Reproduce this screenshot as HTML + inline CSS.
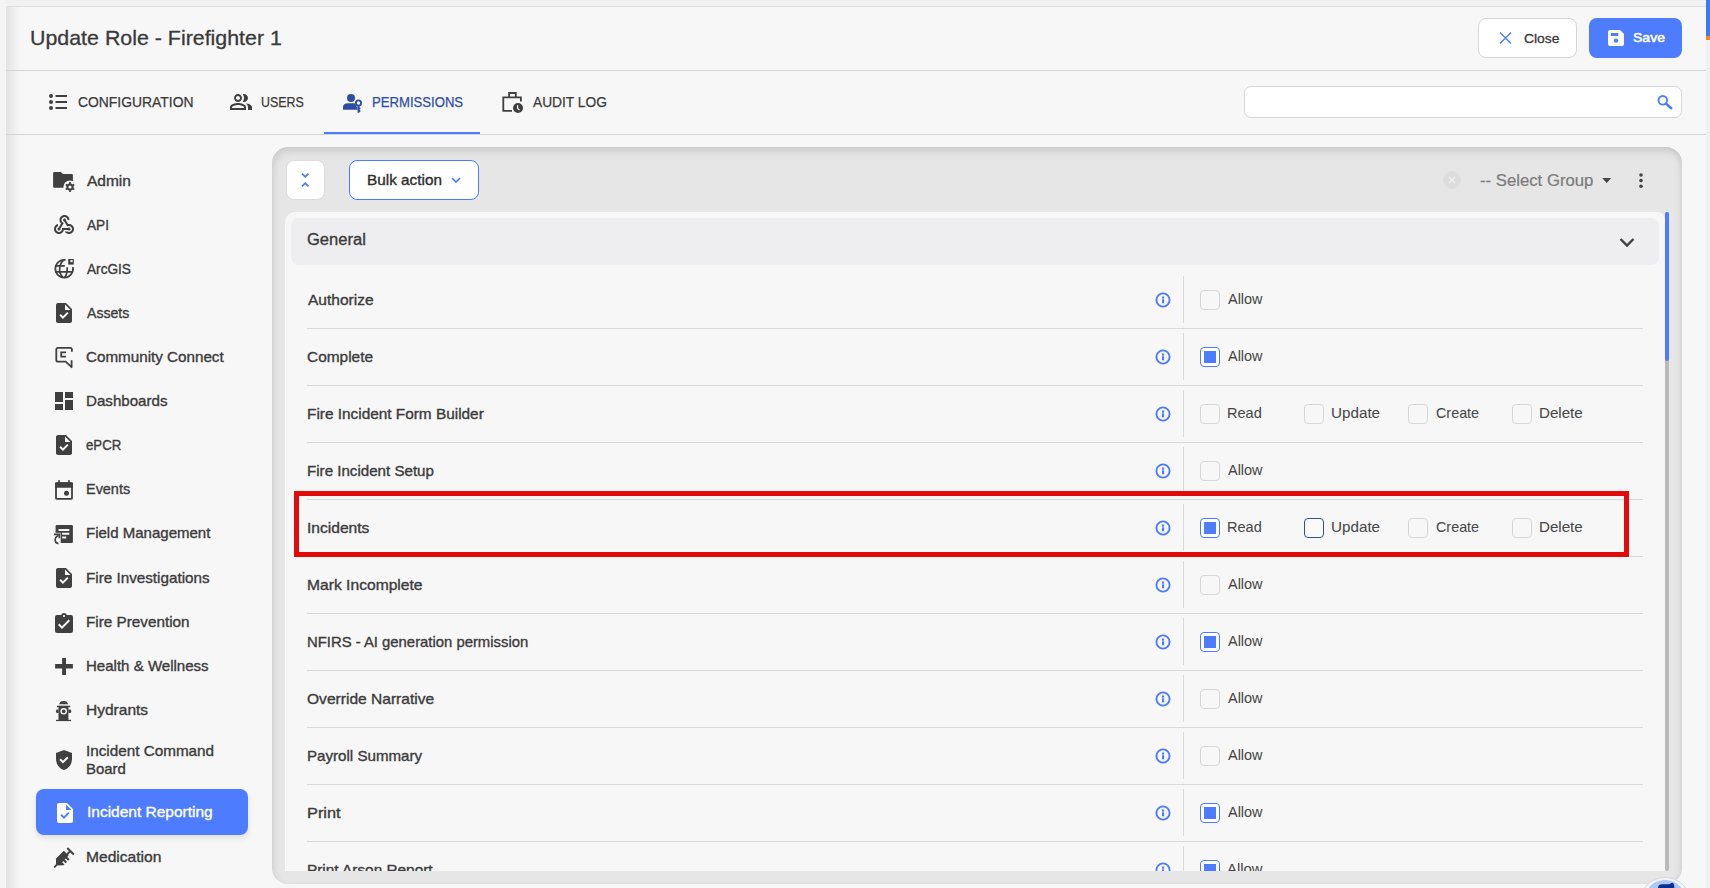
<!DOCTYPE html>
<html><head><meta charset="utf-8"><title>Update Role</title>
<style>
*{box-sizing:border-box;margin:0;padding:0}
html,body{width:1710px;height:888px;overflow:hidden;background:#f7f7f7;font-family:"Liberation Sans",sans-serif;color:#3a3a3a}
body{position:relative}
.t,.i,.b{position:absolute}
.t{white-space:nowrap}
</style></head><body>
<div class="b" style="left:0;top:0;width:1710px;height:6px;background:#f1f1f1"></div>
<div class="b" style="left:0;top:6px;width:1706px;height:1px;background:#dedede"></div>
<div class="b" style="left:0;top:0;width:6px;height:888px;background:#f4f4f4"></div>
<div class="b" style="left:6px;top:7px;width:14px;height:881px;background:linear-gradient(to right,#e2e2e2,rgba(247,247,247,0))"></div>
<div class="b" style="left:1706px;top:0;width:4px;height:888px;background:#f0f1f4"></div>
<div class="b" style="left:1706px;top:0;width:4px;height:36px;background:#3d78f5"></div>
<div class="b" style="left:1706px;top:36px;width:4px;height:4px;background:#ff7f1a"></div>
<div class="t" style="left:29.76px;top:27.22px;font-size:21px;line-height:21px;font-weight:normal;color:#3a3a3a;-webkit-text-stroke:0.3px #3a3a3a;transform:scaleX(1.0180);transform-origin:0 0;">Update Role - Firefighter 1</div>
<div class="b" style="left:1478px;top:18px;width:99px;height:40px;background:#fff;border:1px solid #d6d6d6;border-radius:8px"></div>
<svg class="i" style="left:1499px;top:32px;" width="13" height="12" viewBox="0 0 13 12"><path d="M1 0.5L12 11.5M12 0.5L1 11.5" stroke="#4d7cfe" stroke-width="1.4" fill="none"/></svg>
<div class="t" style="left:1524.00px;top:31.57px;font-size:13.5px;line-height:13.5px;font-weight:normal;color:#3a3a3a;-webkit-text-stroke:0.3px #3a3a3a;transform:scaleX(1.0294);transform-origin:0 0;">Close</div>
<div class="b" style="left:1589px;top:18px;width:93px;height:40px;background:#4d7cfe;border-radius:8px"></div>
<svg class="i" style="left:1608px;top:30px;" width="16" height="16" viewBox="0 0 16 16"><path d="M2 0H12L16 4V14Q16 16 14 16H2Q0 16 0 14V2Q0 0 2 0Z" fill="#fff"/><rect x="3" y="3" width="7.3" height="3" fill="#4d7cfe"/><circle cx="8" cy="10.6" r="2.2" fill="#4d7cfe"/></svg>
<div class="t" style="left:1632.97px;top:31.49px;font-size:13.6px;line-height:13.6px;font-weight:normal;color:#ffffff;-webkit-text-stroke:0.5px #ffffff;transform:scaleX(1.0333);transform-origin:0 0;">Save</div>
<div class="b" style="left:6px;top:70px;width:1700px;height:1px;background:#d4d4d4"></div>
<svg class="i" style="left:49px;top:94px;" width="18" height="16" viewBox="0 0 18 16"><circle cx="2" cy="2" r="2" fill="#404040"/><circle cx="2" cy="8" r="2" fill="#404040"/><circle cx="2" cy="14" r="2" fill="#404040"/><path d="M6.5 2H18M6.5 8H18M6.5 14H18" stroke="#404040" stroke-width="1.9"/></svg>
<div class="t" style="left:78.00px;top:95.15px;font-size:14px;line-height:14px;font-weight:normal;color:#3a3a3a;-webkit-text-stroke:0.25px #3a3a3a;transform:scaleX(0.9922);transform-origin:0 0;">CONFIGURATION</div>
<svg class="i" style="left:229px;top:90px;" width="24" height="24" viewBox="0 0 24 24"><path d="M16.67 13.13C18.04 14.06 19 15.32 19 17v3h4v-3c0-2.18-3.57-3.47-6.33-3.87zM9 12c2.21 0 4-1.79 4-4s-1.79-4-4-4-4 1.79-4 4 1.79 4 4 4zm0-6c1.1 0 2 .9 2 2s-.9 2-2 2-2-.9-2-2 .9-2 2-2zM15 12c2.21 0 4-1.79 4-4s-1.79-4-4-4c-.47 0-.91.1-1.33.24C14.5 5.27 15 6.58 15 8s-.5 2.73-1.33 3.76c.42.14.86.24 1.33.24zM9 13c-2.67 0-8 1.34-8 4v3h16v-3c0-2.66-5.33-4-8-4zm6 5H3v-.99C3.2 16.29 6.3 15 9 15s5.8 1.29 6 2v1z" fill="#404040"/></svg>
<div class="t" style="left:260.92px;top:95.15px;font-size:14px;line-height:14px;font-weight:normal;color:#3a3a3a;-webkit-text-stroke:0.25px #3a3a3a;transform:scaleX(0.8872);transform-origin:0 0;">USERS</div>
<svg class="i" style="left:342px;top:93px;" width="22" height="21" viewBox="0 0 22 21"><circle cx="9" cy="5" r="4" fill="#2f4fa6"/><path d="M1 16.8V14.5Q1 10.3 6 10.3H13.2Q13.5 13 15.5 14.5V16.8Z" fill="#2f4fa6"/><circle cx="16.5" cy="10" r="2.6" fill="none" stroke="#2f4fa6" stroke-width="1.9"/><path d="M16.5 12.5V19.8M16.5 15.5H18.3M16.5 18H18.3" stroke="#2f4fa6" stroke-width="1.9"/></svg>
<div class="t" style="left:372.22px;top:95.15px;font-size:14px;line-height:14px;font-weight:normal;color:#2f4fa6;-webkit-text-stroke:0.25px #2f4fa6;transform:scaleX(0.9371);transform-origin:0 0;">PERMISSIONS</div>
<div class="b" style="left:324px;top:132px;width:156px;height:3px;background:#4d7cfe"></div>
<svg class="i" style="left:500px;top:90px;" width="26" height="24" viewBox="0 0 26 24"><path d="M12 20.9H3.3V7.3H20.9V11.5" fill="none" stroke="#404040" stroke-width="1.8"/><path d="M9.1 7.3V3H15.8V7.3" fill="none" stroke="#404040" stroke-width="1.8"/><circle cx="18" cy="18" r="5" fill="#404040"/><path d="M17.6 15.2V18.5L19.6 20" fill="none" stroke="#f7f7f7" stroke-width="1.2"/></svg>
<div class="t" style="left:532.59px;top:95.15px;font-size:14px;line-height:14px;font-weight:normal;color:#3a3a3a;-webkit-text-stroke:0.25px #3a3a3a;transform:scaleX(0.9827);transform-origin:0 0;">AUDIT LOG</div>
<div class="b" style="left:6px;top:134px;width:1700px;height:1px;background:#d4d4d4"></div>
<div class="b" style="left:1244px;top:86px;width:438px;height:32px;background:#fff;border:1px solid #d6d6d6;border-radius:7px"></div>
<svg class="i" style="left:1656px;top:94px;" width="18" height="18" viewBox="0 0 18 18"><circle cx="6.8" cy="6.3" r="4.3" fill="none" stroke="#4d7cfe" stroke-width="1.9"/><path d="M10 9.6L15.2 14.2" stroke="#4d7cfe" stroke-width="2.6" stroke-linecap="round"/></svg>
<div class="t" style="left:86.82px;top:173.73px;font-size:14.5px;line-height:14.5px;font-weight:normal;color:#3c3c3c;-webkit-text-stroke:0.35px currentColor;transform:scaleX(1.0683);transform-origin:0 0;">Admin</div>
<div class="t" style="left:86.77px;top:217.73px;font-size:14.5px;line-height:14.5px;font-weight:normal;color:#3c3c3c;-webkit-text-stroke:0.35px currentColor;transform:scaleX(0.9391);transform-origin:0 0;">API</div>
<div class="t" style="left:86.77px;top:261.73px;font-size:14.5px;line-height:14.5px;font-weight:normal;color:#3c3c3c;-webkit-text-stroke:0.35px currentColor;transform:scaleX(0.9404);transform-origin:0 0;">ArcGIS</div>
<div class="t" style="left:86.78px;top:305.73px;font-size:14.5px;line-height:14.5px;font-weight:normal;color:#3c3c3c;-webkit-text-stroke:0.35px currentColor;transform:scaleX(0.9727);transform-origin:0 0;">Assets</div>
<div class="t" style="left:85.76px;top:349.73px;font-size:14.5px;line-height:14.5px;font-weight:normal;color:#3c3c3c;-webkit-text-stroke:0.35px currentColor;transform:scaleX(1.0481);transform-origin:0 0;">Community Connect</div>
<div class="t" style="left:85.76px;top:393.73px;font-size:14.5px;line-height:14.5px;font-weight:normal;color:#3c3c3c;-webkit-text-stroke:0.35px currentColor;transform:scaleX(1.0429);transform-origin:0 0;">Dashboards</div>
<div class="t" style="left:85.84px;top:437.73px;font-size:14.5px;line-height:14.5px;font-weight:normal;color:#3c3c3c;-webkit-text-stroke:0.35px currentColor;transform:scaleX(0.9135);transform-origin:0 0;">ePCR</div>
<div class="t" style="left:85.79px;top:481.73px;font-size:14.5px;line-height:14.5px;font-weight:normal;color:#3c3c3c;-webkit-text-stroke:0.35px currentColor;transform:scaleX(0.9955);transform-origin:0 0;">Events</div>
<div class="t" style="left:85.77px;top:525.73px;font-size:14.5px;line-height:14.5px;font-weight:normal;color:#3c3c3c;-webkit-text-stroke:0.35px currentColor;transform:scaleX(1.0358);transform-origin:0 0;">Field Management</div>
<div class="t" style="left:85.76px;top:570.73px;font-size:14.5px;line-height:14.5px;font-weight:normal;color:#3c3c3c;-webkit-text-stroke:0.35px currentColor;transform:scaleX(1.0504);transform-origin:0 0;">Fire Investigations</div>
<div class="t" style="left:85.76px;top:614.73px;font-size:14.5px;line-height:14.5px;font-weight:normal;color:#3c3c3c;-webkit-text-stroke:0.35px currentColor;transform:scaleX(1.0526);transform-origin:0 0;">Fire Prevention</div>
<div class="t" style="left:85.77px;top:658.73px;font-size:14.5px;line-height:14.5px;font-weight:normal;color:#3c3c3c;-webkit-text-stroke:0.35px currentColor;transform:scaleX(1.0376);transform-origin:0 0;">Health &amp; Wellness</div>
<div class="t" style="left:85.75px;top:702.73px;font-size:14.5px;line-height:14.5px;font-weight:normal;color:#3c3c3c;-webkit-text-stroke:0.35px currentColor;transform:scaleX(1.0702);transform-origin:0 0;">Hydrants</div>
<div class="t" style="left:85.76px;top:743.73px;font-size:14.5px;line-height:14.5px;font-weight:normal;color:#3c3c3c;-webkit-text-stroke:0.35px currentColor;transform:scaleX(1.0521);transform-origin:0 0;">Incident Command</div>
<div class="t" style="left:85.77px;top:761.73px;font-size:14.5px;line-height:14.5px;font-weight:normal;color:#3c3c3c;-webkit-text-stroke:0.35px currentColor;transform:scaleX(1.0289);transform-origin:0 0;">Board</div>
<div class="t" style="left:85.74px;top:849.73px;font-size:14.5px;line-height:14.5px;font-weight:normal;color:#3c3c3c;-webkit-text-stroke:0.35px currentColor;transform:scaleX(1.0754);transform-origin:0 0;">Medication</div>
<div class="b" style="left:36px;top:789px;width:212px;height:46px;background:#4d7cfe;border-radius:8px;box-shadow:0 3px 6px rgba(0,0,0,0.10)"></div>
<div class="t" style="left:86.55px;top:805.03px;font-size:14.5px;line-height:14.5px;font-weight:normal;color:#ffffff;-webkit-text-stroke:0.35px currentColor;transform:scaleX(1.0684);transform-origin:0 0;">Incident Reporting</div>
<svg class="i" style="left:52.7px;top:801.4px;" width="24" height="24" viewBox="0 0 24 24"><path d="M14 2H6c-1.1 0-1.99.9-1.99 2L4 20c0 1.1.89 2 1.99 2H18c1.1 0 2-.9 2-2V8l-6-6zM13 9V3.5L18.5 9H13z" fill="#ffffff"/><path d="M10.94 18L7.4 14.46l1.41-1.41 2.12 2.12 4.24-4.24 1.41 1.41L10.94 18z" fill="#4d7cfe"/></svg>
<svg class="i" style="left:52px;top:171px;" width="24" height="24" viewBox="0 0 24 24"><path d="M2.1 1H8.9L10.9 3H19.9Q20.9 3 20.9 4V16.7H2.1Q1.1 16.7 1.1 15.7V2Q1.1 1 2.1 1Z" fill="#404040"/><circle cx="18" cy="16" r="6.6" fill="#f7f7f7"/><path d="M19.85 12.80L18.83 12.39L18.87 11.08L17.13 11.08L17.17 12.39L16.15 12.80L15.29 13.48L14.17 12.79L13.30 14.29L14.46 14.92L14.30 16.00L14.46 17.08L13.30 17.71L14.17 19.21L15.29 18.52L16.15 19.20L17.17 19.61L17.13 20.92L18.87 20.92L18.83 19.61L19.85 19.20L20.71 18.52L21.83 19.21L22.70 17.71L21.54 17.08L21.70 16.00L21.54 14.92L22.70 14.29L21.83 12.79L20.71 13.48Z" fill="#404040"/><circle cx="18" cy="16" r="1.6" fill="#f7f7f7"/></svg>
<svg class="i" style="left:52px;top:213.3px;" width="24" height="24" viewBox="0 0 24 24"><path d="M10 15h5.88c.27-.31.67-.5 1.12-.5.83 0 1.5.67 1.5 1.5s-.67 1.5-1.5 1.5c-.44 0-.84-.19-1.12-.5H11.9c-.46 2.28-2.48 4-4.9 4-2.76 0-5-2.24-5-5 0-2.42 1.72-4.44 4-4.9v2.07c-1.16.41-2 1.53-2 2.83 0 1.65 1.35 3 3 3s3-1.35 3-3v-1zm2.5-11c1.65 0 3 1.35 3 3h2c0-2.76-2.24-5-5-5s-5 2.24-5 5c0 1.43.6 2.71 1.55 3.62l-2.35 3.9c-.68.14-1.2.75-1.2 1.48 0 .83.67 1.5 1.5 1.5s1.5-.67 1.5-1.5c0-.16-.02-.31-.07-.45l3.38-5.63C10.49 9.61 9.5 8.42 9.5 7c0-1.65 1.35-3 3-3zm4.5 9c-.64 0-1.23.2-1.72.54l-3.05-5.07C11.53 8.35 11 7.74 11 7c0-.83.67-1.5 1.5-1.5S14 6.17 14 7c0 .15-.02.29-.06.43l2.19 3.65c.28-.05.57-.08.87-.08 2.76 0 5 2.24 5 5s-2.24 5-5 5c-1.85 0-3.47-1.01-4.33-2.5h2.67c.48.32 1.05.5 1.66.5 1.65 0 3-1.35 3-3s-1.35-3-3-3z" fill="#404040"/></svg>
<svg class="i" style="left:52px;top:257px;" width="24" height="24" viewBox="0 0 24 24"><path d="M13.6 3.05A8.85 8.85 0 1 0 20.9 10.2" fill="none" stroke="#404040" stroke-width="1.8"/><path d="M3.3 8.8H12.8M3.3 14.8H21" fill="none" stroke="#404040" stroke-width="1.7"/><path d="M11.5 3.2Q7.3 7.5 7.6 13Q8 18 11 20.6" fill="none" stroke="#404040" stroke-width="1.7"/><path d="M15.2 10.2Q15.6 16.5 12.6 20.6" fill="none" stroke="#404040" stroke-width="1.7"/><rect x="16.2" y="2" width="5.6" height="5.6" fill="#404040"/><rect x="18.4" y="3.1" width="2.2" height="2" fill="#f7f7f7"/></svg>
<svg class="i" style="left:52px;top:300.8px;" width="24" height="24" viewBox="0 0 24 24"><path d="M14 2H6c-1.1 0-1.99.9-1.99 2L4 20c0 1.1.89 2 1.99 2H18c1.1 0 2-.9 2-2V8l-6-6zm-3.06 16L7.4 14.46l1.41-1.41 2.12 2.12 4.24-4.24 1.41 1.41L10.94 18zM13 9V3.5L18.5 9H13z" fill="#404040"/></svg>
<svg class="i" style="left:52px;top:432.8px;" width="24" height="24" viewBox="0 0 24 24"><path d="M14 2H6c-1.1 0-1.99.9-1.99 2L4 20c0 1.1.89 2 1.99 2H18c1.1 0 2-.9 2-2V8l-6-6zm-3.06 16L7.4 14.46l1.41-1.41 2.12 2.12 4.24-4.24 1.41 1.41L10.94 18zM13 9V3.5L18.5 9H13z" fill="#404040"/></svg>
<svg class="i" style="left:52px;top:565.8px;" width="24" height="24" viewBox="0 0 24 24"><path d="M14 2H6c-1.1 0-1.99.9-1.99 2L4 20c0 1.1.89 2 1.99 2H18c1.1 0 2-.9 2-2V8l-6-6zm-3.06 16L7.4 14.46l1.41-1.41 2.12 2.12 4.24-4.24 1.41 1.41L10.94 18zM13 9V3.5L18.5 9H13z" fill="#404040"/></svg>
<svg class="i" style="left:52px;top:345px;" width="24" height="24" viewBox="0 0 24 24"><path d="M19.9 6.8V4.6Q19.9 2.9 18.2 2.9H6Q4.3 2.9 4.3 4.6V15Q4.3 16.7 6 16.7H13.7L19.6 22.2V15.3" fill="none" stroke="#404040" stroke-width="1.8" stroke-linejoin="round"/><path d="M14 7.4H9.2V11.7H14" fill="none" stroke="#404040" stroke-width="1.8"/></svg>
<svg class="i" style="left:52px;top:389px;" width="24" height="24" viewBox="0 0 24 24"><path d="M3 13h8V3H3v10zm0 8h8v-6H3v6zm10 0h8V11h-8v10zm0-18v6h8V3h-8z" fill="#404040"/></svg>
<svg class="i" style="left:52px;top:479px;" width="24" height="24" viewBox="0 0 24 24"><path d="M7 1V4M17 1V4" stroke="#404040" stroke-width="1.6"/><rect x="4" y="4.1" width="16" height="15.8" rx="1" fill="none" stroke="#404040" stroke-width="1.8"/><rect x="3.1" y="3.2" width="17.8" height="5.6" rx="1" fill="#404040"/><circle cx="14.5" cy="14.3" r="2.5" fill="#404040"/></svg>
<svg class="i" style="left:52px;top:523px;" width="24" height="24" viewBox="0 0 24 24"><rect x="3.6" y="2.1" width="17.3" height="17.8" rx="1.2" fill="#404040"/><path d="M6.5 5.9H17.3V7.9H6.5ZM10.1 9.7H17.3V11.7H10.1ZM10.1 13.5H14.2V15.6H10.1Z" fill="#f7f7f7"/><path d="M1 9.8H8.7V22H1Z" fill="#f7f7f7"/><path d="M2 11.4H7.4V15.3" fill="none" stroke="#404040" stroke-width="1.6"/><path d="M6.6 12.4Q2.6 14 3.2 17.8Q3.8 20.4 6.4 20.6" fill="none" stroke="#404040" stroke-width="1.6"/></svg>
<svg class="i" style="left:52px;top:612px;" width="24" height="24" viewBox="0 0 24 24"><path d="M19 3h-4.18C14.4 1.84 13.3 1 12 1c-1.3 0-2.4.84-2.82 2H5c-1.1 0-2 .9-2 2v14c0 1.1.9 2 2 2h14c1.1 0 2-.9 2-2V5c0-1.1-.9-2-2-2zm-7 0c.55 0 1 .45 1 1s-.45 1-1 1-1-.45-1-1 .45-1 1-1zm-2 14l-4-4 1.41-1.41L10 14.17l6.59-6.59L18 9l-8 8z" fill="#404040"/></svg>
<svg class="i" style="left:52px;top:656px;" width="24" height="24" viewBox="0 0 24 24"><path d="M10.1 2H14V8.1H20.9V12.6H14V19H10.1V12.6H3.1V8.1H10.1Z" fill="#404040"/></svg>
<svg class="i" style="left:52px;top:699px;" width="24" height="24" viewBox="0 0 24 24"><path d="M7.2 5.3Q7.6 1.9 11.6 1.9Q15.6 1.9 16 5.3Z" fill="#404040"/><rect x="4.9" y="6.7" width="13.3" height="1.5" fill="#404040"/><rect x="6.5" y="8" width="9.9" height="13.2" fill="#404040"/><path d="M6.5 10.5H4.6Q3.1 12.25 4.6 14H6.5ZM16.4 10.5H18.6Q20.3 12.25 18.6 14H16.4Z" fill="#404040"/><rect x="4" y="20.8" width="15.1" height="1.3" fill="#404040"/><circle cx="11.7" cy="12.3" r="2.6" fill="none" stroke="#f7f7f7" stroke-width="1.4"/></svg>
<svg class="i" style="left:52px;top:748px;" width="24" height="24" viewBox="0 0 24 24"><path d="M12 2L4 5v6.09c0 5.05 3.41 9.76 8 10.91 4.59-1.15 8-5.86 8-10.91V5l-8-3zm-1.06 13.54L7.4 12l1.41-1.41 2.12 2.12 4.24-4.24 1.41 1.41-5.64 5.66z" fill="#404040"/></svg>
<svg class="i" style="left:52px;top:846px;" width="24" height="24" viewBox="0 0 24 24"><g transform="translate(2.2 21.3) rotate(-45)"><rect x="0" y="-0.9" width="3.5" height="1.8" fill="#404040"/><path d="M2.5 0L7.5 -4.9H18.5V5.2H8Z" fill="#404040"/><path d="M9.3 2H10.8V5.6H9.3ZM12.9 2H14.4V5.6H12.9ZM16.5 2H18.6V5.6H16.5Z" fill="#f7f7f7"/><rect x="18" y="-1" width="4.5" height="2" fill="#404040"/><rect x="22" y="-4.4" width="1.9" height="9.2" fill="#404040"/></g></svg>
<div class="b" style="left:272px;top:147px;width:1410px;height:737px;background:#e6e6e6;border-radius:16px;box-shadow:inset 2px 5px 7px rgba(0,0,0,0.10), inset -3px 0 5px rgba(0,0,0,0.05)"></div>
<div class="b" style="left:286px;top:160px;width:39px;height:40px;background:#fff;border:1px solid #dcdcdc;border-radius:8px"></div>
<svg class="i" style="left:296px;top:168.3px;" width="20" height="24" viewBox="0 0 20 24"><path d="M6 5.6L9.2 8.8L12.4 5.6M6 18.4L9.2 15.2L12.4 18.4" fill="none" stroke="#4d7cfe" stroke-width="1.8"/></svg>
<div class="b" style="left:349px;top:160px;width:130px;height:40px;background:#fff;border:1px solid #4d7cfe;border-radius:8px"></div>
<div class="t" style="left:366.58px;top:173.08px;font-size:14.2px;line-height:14.2px;font-weight:normal;color:#2e2e2e;-webkit-text-stroke:0.35px currentColor;transform:scaleX(1.0797);transform-origin:0 0;">Bulk action</div>
<svg class="i" style="left:448px;top:172px;" width="16" height="14" viewBox="0 0 16 14"><path d="M4 6L8 10L12 6" fill="none" stroke="#4d7cfe" stroke-width="1.6"/></svg>
<svg class="i" style="left:1442px;top:170px;" width="20" height="20" viewBox="0 0 20 20"><circle cx="10" cy="10" r="9" fill="#dcdcdc"/><path d="M7 7L13 13M13 7L7 13" stroke="#f2f2f2" stroke-width="1.4"/></svg>
<div class="t" style="left:1480.00px;top:172.29px;font-size:16.2px;line-height:16.2px;font-weight:normal;color:#7b7b7b;-webkit-text-stroke:0.2px #7b7b7b;transform:scaleX(1.0330);transform-origin:0 0;">-- Select Group</div>
<svg class="i" style="left:1600px;top:175px;" width="14" height="10" viewBox="0 0 14 10"><path d="M2.2 3H11.2L6.7 8Z" fill="#454545"/></svg>
<svg class="i" style="left:1635px;top:172px;" width="12" height="18" viewBox="0 0 12 18"><circle cx="6" cy="3" r="1.8" fill="#454545"/><circle cx="6" cy="8.6" r="1.8" fill="#454545"/><circle cx="6" cy="14.2" r="1.8" fill="#454545"/></svg>
<div class="b" style="left:285px;top:212px;width:1380px;height:659px;background:#f7f7f7;border-radius:10px 8px 0 0"></div>
<div class="b" style="left:291px;top:218px;width:1368px;height:47px;background:#eeeef0;border-radius:8px"></div>
<div class="t" style="left:306.77px;top:231.76px;font-size:16px;line-height:16px;font-weight:normal;color:#3a3a3a;-webkit-text-stroke:0.35px currentColor;transform:scaleX(1.0339);transform-origin:0 0;">General</div>
<svg class="i" style="left:1617px;top:234px;" width="20" height="16" viewBox="0 0 20 16"><path d="M3.5 5L10 11.5L16.5 5" fill="none" stroke="#404040" stroke-width="2.4"/></svg>
<div class="b" style="left:1665px;top:212px;width:4px;height:659px;background:#bababa;border-radius:2px"></div>
<div class="b" style="left:1665px;top:212px;width:4px;height:149px;background:#4d7cfe;border-radius:2px"></div>
<div class="b" style="left:285px;top:212px;width:1380px;height:659px;overflow:hidden">
<div class="t" style="left:22.62px;top:80.93px;font-size:14.5px;line-height:14.5px;font-weight:normal;color:#3c3c3c;-webkit-text-stroke:0.35px currentColor;transform:scaleX(1.0721);transform-origin:0 0;">Authorize</div>
<svg class="i" style="left:869px;top:79.2px;" width="18" height="18" viewBox="0 0 18 18"><circle cx="9" cy="9" r="6.6" fill="none" stroke="#4d7cfe" stroke-width="1.9"/><rect x="8" y="5.5" width="2.1" height="2.2" fill="#4d7cfe"/><rect x="8" y="8.3" width="2.1" height="4" fill="#4d7cfe"/></svg>
<div class="b" style="left:898px;top:64px;width:1px;height:47px;background:#dadada"></div>
<div class="b" style="left:915px;top:78.2px;width:20px;height:20px;border:1px solid #d6d6d6;border-radius:4px;background:#f7f7f7"></div>
<div class="t" style="left:943.00px;top:80.18px;font-size:14.2px;line-height:14.2px;font-weight:normal;color:#474747;-webkit-text-stroke:0.05px #474747;transform:scaleX(1.0176);transform-origin:0 0;">Allow</div>
<div class="b" style="left:22px;top:116px;width:1336px;height:1px;background:#d8d8d8"></div>
<div class="t" style="left:21.55px;top:137.93px;font-size:14.5px;line-height:14.5px;font-weight:normal;color:#3c3c3c;-webkit-text-stroke:0.35px currentColor;transform:scaleX(1.0639);transform-origin:0 0;">Complete</div>
<svg class="i" style="left:869px;top:136.2px;" width="18" height="18" viewBox="0 0 18 18"><circle cx="9" cy="9" r="6.6" fill="none" stroke="#4d7cfe" stroke-width="1.9"/><rect x="8" y="5.5" width="2.1" height="2.2" fill="#4d7cfe"/><rect x="8" y="8.3" width="2.1" height="4" fill="#4d7cfe"/></svg>
<div class="b" style="left:898px;top:121px;width:1px;height:47px;background:#dadada"></div>
<div class="b" style="left:915px;top:135.2px;width:20px;height:20px;border:1.5px solid #4d7cfe;border-radius:4px;background:#fff"></div>
<div class="b" style="left:919px;top:139.2px;width:12px;height:12px;background:#4d7cfe"></div>
<div class="t" style="left:943.00px;top:137.18px;font-size:14.2px;line-height:14.2px;font-weight:normal;color:#474747;-webkit-text-stroke:0.05px #474747;transform:scaleX(1.0176);transform-origin:0 0;">Allow</div>
<div class="b" style="left:22px;top:173px;width:1336px;height:1px;background:#d8d8d8"></div>
<div class="t" style="left:21.55px;top:194.93px;font-size:14.5px;line-height:14.5px;font-weight:normal;color:#3c3c3c;-webkit-text-stroke:0.35px currentColor;transform:scaleX(1.0596);transform-origin:0 0;">Fire Incident Form Builder</div>
<svg class="i" style="left:869px;top:193.2px;" width="18" height="18" viewBox="0 0 18 18"><circle cx="9" cy="9" r="6.6" fill="none" stroke="#4d7cfe" stroke-width="1.9"/><rect x="8" y="5.5" width="2.1" height="2.2" fill="#4d7cfe"/><rect x="8" y="8.3" width="2.1" height="4" fill="#4d7cfe"/></svg>
<div class="b" style="left:898px;top:178px;width:1px;height:47px;background:#dadada"></div>
<div class="b" style="left:915px;top:192.2px;width:20px;height:20px;border:1px solid #d6d6d6;border-radius:4px;background:#f7f7f7"></div>
<div class="t" style="left:941.98px;top:194.18px;font-size:14.2px;line-height:14.2px;font-weight:normal;color:#474747;-webkit-text-stroke:0.05px #474747;transform:scaleX(1.0250);transform-origin:0 0;">Read</div>
<div class="b" style="left:1019px;top:192.2px;width:20px;height:20px;border:1px solid #d6d6d6;border-radius:4px;background:#f7f7f7"></div>
<div class="t" style="left:1045.93px;top:194.18px;font-size:14.2px;line-height:14.2px;font-weight:normal;color:#474747;-webkit-text-stroke:0.05px #474747;transform:scaleX(1.0727);transform-origin:0 0;">Update</div>
<div class="b" style="left:1123px;top:192.2px;width:20px;height:20px;border:1px solid #d6d6d6;border-radius:4px;background:#f7f7f7"></div>
<div class="t" style="left:1151.00px;top:194.18px;font-size:14.2px;line-height:14.2px;font-weight:normal;color:#474747;-webkit-text-stroke:0.05px #474747;transform:scaleX(1.0119);transform-origin:0 0;">Create</div>
<div class="b" style="left:1227px;top:192.2px;width:20px;height:20px;border:1px solid #d6d6d6;border-radius:4px;background:#f7f7f7"></div>
<div class="t" style="left:1253.93px;top:194.18px;font-size:14.2px;line-height:14.2px;font-weight:normal;color:#474747;-webkit-text-stroke:0.05px #474747;transform:scaleX(1.0667);transform-origin:0 0;">Delete</div>
<div class="b" style="left:22px;top:230px;width:1336px;height:1px;background:#d8d8d8"></div>
<div class="t" style="left:21.57px;top:251.93px;font-size:14.5px;line-height:14.5px;font-weight:normal;color:#3c3c3c;-webkit-text-stroke:0.35px currentColor;transform:scaleX(1.0430);transform-origin:0 0;">Fire Incident Setup</div>
<svg class="i" style="left:869px;top:250.2px;" width="18" height="18" viewBox="0 0 18 18"><circle cx="9" cy="9" r="6.6" fill="none" stroke="#4d7cfe" stroke-width="1.9"/><rect x="8" y="5.5" width="2.1" height="2.2" fill="#4d7cfe"/><rect x="8" y="8.3" width="2.1" height="4" fill="#4d7cfe"/></svg>
<div class="b" style="left:898px;top:235px;width:1px;height:47px;background:#dadada"></div>
<div class="b" style="left:915px;top:249.2px;width:20px;height:20px;border:1px solid #d6d6d6;border-radius:4px;background:#f7f7f7"></div>
<div class="t" style="left:943.00px;top:251.18px;font-size:14.2px;line-height:14.2px;font-weight:normal;color:#474747;-webkit-text-stroke:0.05px #474747;transform:scaleX(1.0176);transform-origin:0 0;">Allow</div>
<div class="b" style="left:22px;top:287px;width:1336px;height:1px;background:#d8d8d8"></div>
<div class="t" style="left:21.54px;top:308.93px;font-size:14.5px;line-height:14.5px;font-weight:normal;color:#3c3c3c;-webkit-text-stroke:0.35px currentColor;transform:scaleX(1.0754);transform-origin:0 0;">Incidents</div>
<svg class="i" style="left:869px;top:307.2px;" width="18" height="18" viewBox="0 0 18 18"><circle cx="9" cy="9" r="6.6" fill="none" stroke="#4d7cfe" stroke-width="1.9"/><rect x="8" y="5.5" width="2.1" height="2.2" fill="#4d7cfe"/><rect x="8" y="8.3" width="2.1" height="4" fill="#4d7cfe"/></svg>
<div class="b" style="left:898px;top:292px;width:1px;height:47px;background:#dadada"></div>
<div class="b" style="left:915px;top:306.2px;width:20px;height:20px;border:1.5px solid #4d7cfe;border-radius:4px;background:#fff"></div>
<div class="b" style="left:919px;top:310.2px;width:12px;height:12px;background:#4d7cfe"></div>
<div class="t" style="left:941.98px;top:308.18px;font-size:14.2px;line-height:14.2px;font-weight:normal;color:#474747;-webkit-text-stroke:0.05px #474747;transform:scaleX(1.0250);transform-origin:0 0;">Read</div>
<div class="b" style="left:1019px;top:306.2px;width:20px;height:20px;border:1.5px solid #3a4d9c;border-radius:4px;background:#fafafa"></div>
<div class="t" style="left:1045.93px;top:308.18px;font-size:14.2px;line-height:14.2px;font-weight:normal;color:#474747;-webkit-text-stroke:0.05px #474747;transform:scaleX(1.0727);transform-origin:0 0;">Update</div>
<div class="b" style="left:1123px;top:306.2px;width:20px;height:20px;border:1px solid #d6d6d6;border-radius:4px;background:#f7f7f7"></div>
<div class="t" style="left:1151.00px;top:308.18px;font-size:14.2px;line-height:14.2px;font-weight:normal;color:#474747;-webkit-text-stroke:0.05px #474747;transform:scaleX(1.0119);transform-origin:0 0;">Create</div>
<div class="b" style="left:1227px;top:306.2px;width:20px;height:20px;border:1px solid #d6d6d6;border-radius:4px;background:#f7f7f7"></div>
<div class="t" style="left:1253.93px;top:308.18px;font-size:14.2px;line-height:14.2px;font-weight:normal;color:#474747;-webkit-text-stroke:0.05px #474747;transform:scaleX(1.0667);transform-origin:0 0;">Delete</div>
<div class="b" style="left:22px;top:344px;width:1336px;height:1px;background:#d8d8d8"></div>
<div class="t" style="left:21.54px;top:365.93px;font-size:14.5px;line-height:14.5px;font-weight:normal;color:#3c3c3c;-webkit-text-stroke:0.35px currentColor;transform:scaleX(1.0783);transform-origin:0 0;">Mark Incomplete</div>
<svg class="i" style="left:869px;top:364.2px;" width="18" height="18" viewBox="0 0 18 18"><circle cx="9" cy="9" r="6.6" fill="none" stroke="#4d7cfe" stroke-width="1.9"/><rect x="8" y="5.5" width="2.1" height="2.2" fill="#4d7cfe"/><rect x="8" y="8.3" width="2.1" height="4" fill="#4d7cfe"/></svg>
<div class="b" style="left:898px;top:349px;width:1px;height:47px;background:#dadada"></div>
<div class="b" style="left:915px;top:363.2px;width:20px;height:20px;border:1px solid #d6d6d6;border-radius:4px;background:#f7f7f7"></div>
<div class="t" style="left:943.00px;top:365.18px;font-size:14.2px;line-height:14.2px;font-weight:normal;color:#474747;-webkit-text-stroke:0.05px #474747;transform:scaleX(1.0176);transform-origin:0 0;">Allow</div>
<div class="b" style="left:22px;top:401px;width:1336px;height:1px;background:#d8d8d8"></div>
<div class="t" style="left:21.58px;top:422.93px;font-size:14.5px;line-height:14.5px;font-weight:normal;color:#3c3c3c;-webkit-text-stroke:0.35px currentColor;transform:scaleX(1.0242);transform-origin:0 0;">NFIRS - AI generation permission</div>
<svg class="i" style="left:869px;top:421.2px;" width="18" height="18" viewBox="0 0 18 18"><circle cx="9" cy="9" r="6.6" fill="none" stroke="#4d7cfe" stroke-width="1.9"/><rect x="8" y="5.5" width="2.1" height="2.2" fill="#4d7cfe"/><rect x="8" y="8.3" width="2.1" height="4" fill="#4d7cfe"/></svg>
<div class="b" style="left:898px;top:406px;width:1px;height:47px;background:#dadada"></div>
<div class="b" style="left:915px;top:420.2px;width:20px;height:20px;border:1.5px solid #4d7cfe;border-radius:4px;background:#fff"></div>
<div class="b" style="left:919px;top:424.2px;width:12px;height:12px;background:#4d7cfe"></div>
<div class="t" style="left:943.00px;top:422.18px;font-size:14.2px;line-height:14.2px;font-weight:normal;color:#474747;-webkit-text-stroke:0.05px #474747;transform:scaleX(1.0176);transform-origin:0 0;">Allow</div>
<div class="b" style="left:22px;top:458px;width:1336px;height:1px;background:#d8d8d8"></div>
<div class="t" style="left:21.55px;top:479.93px;font-size:14.5px;line-height:14.5px;font-weight:normal;color:#3c3c3c;-webkit-text-stroke:0.35px currentColor;transform:scaleX(1.0737);transform-origin:0 0;">Override Narrative</div>
<svg class="i" style="left:869px;top:478.2px;" width="18" height="18" viewBox="0 0 18 18"><circle cx="9" cy="9" r="6.6" fill="none" stroke="#4d7cfe" stroke-width="1.9"/><rect x="8" y="5.5" width="2.1" height="2.2" fill="#4d7cfe"/><rect x="8" y="8.3" width="2.1" height="4" fill="#4d7cfe"/></svg>
<div class="b" style="left:898px;top:463px;width:1px;height:47px;background:#dadada"></div>
<div class="b" style="left:915px;top:477.2px;width:20px;height:20px;border:1px solid #d6d6d6;border-radius:4px;background:#f7f7f7"></div>
<div class="t" style="left:943.00px;top:479.18px;font-size:14.2px;line-height:14.2px;font-weight:normal;color:#474747;-webkit-text-stroke:0.05px #474747;transform:scaleX(1.0176);transform-origin:0 0;">Allow</div>
<div class="b" style="left:22px;top:515px;width:1336px;height:1px;background:#d8d8d8"></div>
<div class="t" style="left:21.57px;top:536.93px;font-size:14.5px;line-height:14.5px;font-weight:normal;color:#3c3c3c;-webkit-text-stroke:0.35px currentColor;transform:scaleX(1.0427);transform-origin:0 0;">Payroll Summary</div>
<svg class="i" style="left:869px;top:535.2px;" width="18" height="18" viewBox="0 0 18 18"><circle cx="9" cy="9" r="6.6" fill="none" stroke="#4d7cfe" stroke-width="1.9"/><rect x="8" y="5.5" width="2.1" height="2.2" fill="#4d7cfe"/><rect x="8" y="8.3" width="2.1" height="4" fill="#4d7cfe"/></svg>
<div class="b" style="left:898px;top:520px;width:1px;height:47px;background:#dadada"></div>
<div class="b" style="left:915px;top:534.2px;width:20px;height:20px;border:1px solid #d6d6d6;border-radius:4px;background:#f7f7f7"></div>
<div class="t" style="left:943.00px;top:536.18px;font-size:14.2px;line-height:14.2px;font-weight:normal;color:#474747;-webkit-text-stroke:0.05px #474747;transform:scaleX(1.0176);transform-origin:0 0;">Allow</div>
<div class="b" style="left:22px;top:572px;width:1336px;height:1px;background:#d8d8d8"></div>
<div class="t" style="left:21.51px;top:593.93px;font-size:14.5px;line-height:14.5px;font-weight:normal;color:#3c3c3c;-webkit-text-stroke:0.35px currentColor;transform:scaleX(1.1276);transform-origin:0 0;">Print</div>
<svg class="i" style="left:869px;top:592.2px;" width="18" height="18" viewBox="0 0 18 18"><circle cx="9" cy="9" r="6.6" fill="none" stroke="#4d7cfe" stroke-width="1.9"/><rect x="8" y="5.5" width="2.1" height="2.2" fill="#4d7cfe"/><rect x="8" y="8.3" width="2.1" height="4" fill="#4d7cfe"/></svg>
<div class="b" style="left:898px;top:577px;width:1px;height:47px;background:#dadada"></div>
<div class="b" style="left:915px;top:591.2px;width:20px;height:20px;border:1.5px solid #4d7cfe;border-radius:4px;background:#fff"></div>
<div class="b" style="left:919px;top:595.2px;width:12px;height:12px;background:#4d7cfe"></div>
<div class="t" style="left:943.00px;top:593.18px;font-size:14.2px;line-height:14.2px;font-weight:normal;color:#474747;-webkit-text-stroke:0.05px #474747;transform:scaleX(1.0176);transform-origin:0 0;">Allow</div>
<div class="b" style="left:22px;top:629px;width:1336px;height:1px;background:#d8d8d8"></div>
<div class="t" style="left:21.55px;top:650.93px;font-size:14.5px;line-height:14.5px;font-weight:normal;color:#3c3c3c;-webkit-text-stroke:0.35px currentColor;transform:scaleX(1.0602);transform-origin:0 0;">Print Arson Report</div>
<svg class="i" style="left:869px;top:649.2px;" width="18" height="18" viewBox="0 0 18 18"><circle cx="9" cy="9" r="6.6" fill="none" stroke="#4d7cfe" stroke-width="1.9"/><rect x="8" y="5.5" width="2.1" height="2.2" fill="#4d7cfe"/><rect x="8" y="8.3" width="2.1" height="4" fill="#4d7cfe"/></svg>
<div class="b" style="left:898px;top:634px;width:1px;height:47px;background:#dadada"></div>
<div class="b" style="left:915px;top:648.2px;width:20px;height:20px;border:1.5px solid #4d7cfe;border-radius:4px;background:#fff"></div>
<div class="b" style="left:919px;top:652.2px;width:12px;height:12px;background:#4d7cfe"></div>
<div class="t" style="left:941.95px;top:650.18px;font-size:14.2px;line-height:14.2px;font-weight:normal;color:#474747;-webkit-text-stroke:0.05px #474747;transform:scaleX(1.0485);transform-origin:0 0;">Allow</div>
</div>
<div class="b" style="left:294px;top:491px;width:1335px;height:66px;border:5px solid #e30a0a"></div>
<div class="b" style="left:1638.5px;top:877px;width:52px;height:52px;border-radius:50%;background:#f4f4f4;border:1px solid #dadada"></div>
<div class="b" style="left:1643.5px;top:880px;width:42px;height:42px;border-radius:50%;background:#adc6ff"></div>
<svg class="i" style="left:1656px;top:882px;" width="20" height="6" viewBox="0 0 20 6"><path d="M2 6Q2 2.2 6 2.2H12.5Q14 2.2 15 1.2Q16.5 0.2 17.5 1.5Q18.6 3 18.3 6Z" fill="#0a2f8f"/></svg>
</body></html>
